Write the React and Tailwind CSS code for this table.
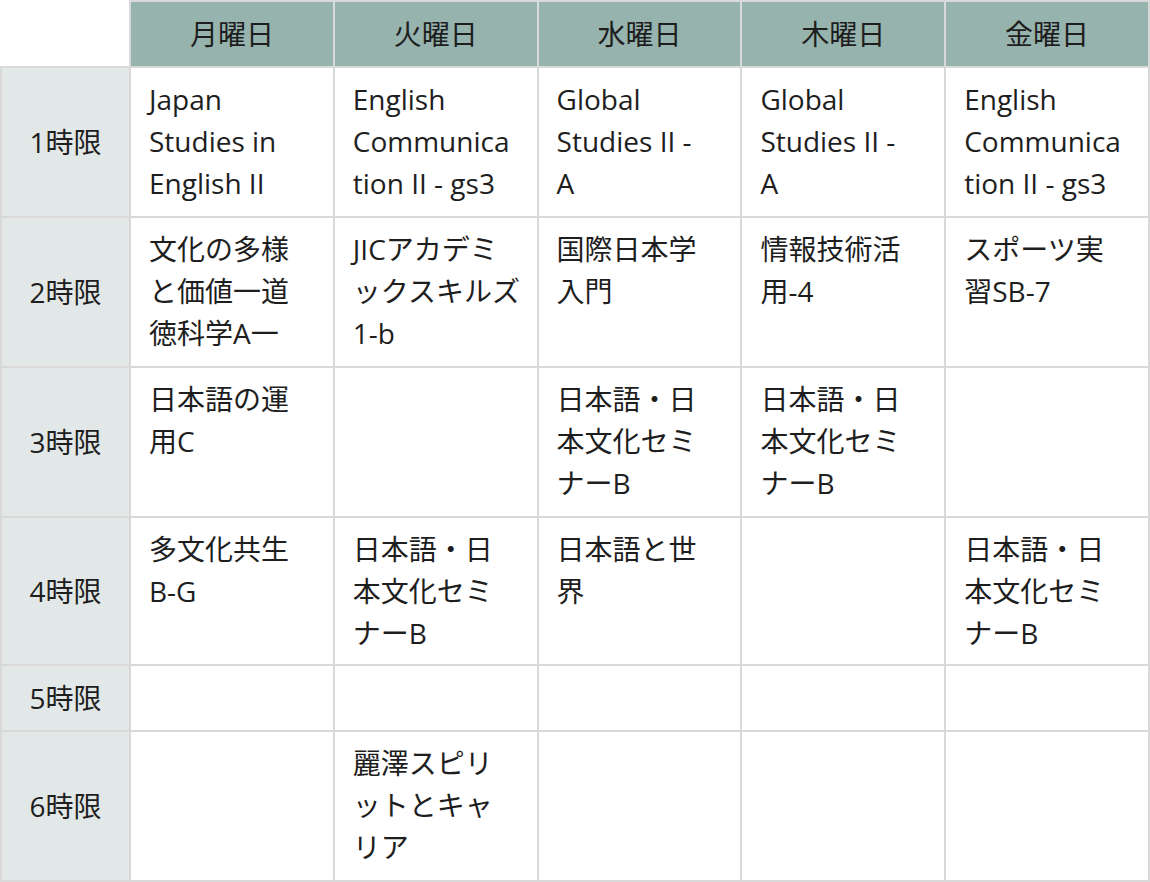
import React from "react";

const days = ["月曜日", "火曜日", "水曜日", "木曜日", "金曜日"];

const rows = [
  {
    label: "1時限",
    h: "h-[150px]",
    cells: [
      ["Japan", "Studies in", "English II"],
      ["English", "Communica", "tion II - gs3"],
      ["Global", "Studies II -", "A"],
      ["Global", "Studies II -", "A"],
      ["English", "Communica", "tion II - gs3"],
    ],
  },
  {
    label: "2時限",
    h: "h-[150px]",
    cells: [
      ["文化の多様", "と価値一道", "徳科学A一"],
      ["JICアカデミ", "ックスキルズ", "1-b"],
      ["国際日本学", "入門"],
      ["情報技術活", "用-4"],
      ["スポーツ実", "習SB-7"],
    ],
  },
  {
    label: "3時限",
    h: "h-[150px]",
    cells: [
      ["日本語の運", "用C"],
      [],
      ["日本語・日", "本文化セミ", "ナーB"],
      ["日本語・日", "本文化セミ", "ナーB"],
      [],
    ],
  },
  {
    label: "4時限",
    h: "h-[148px]",
    cells: [
      ["多文化共生", "B-G"],
      ["日本語・日", "本文化セミ", "ナーB"],
      ["日本語と世", "界"],
      [],
      ["日本語・日", "本文化セミ", "ナーB"],
    ],
  },
  { label: "5時限", h: "h-[66px]", cells: [[], [], [], [], []] },
  {
    label: "6時限",
    h: "h-[150px]",
    cells: [[], ["麗澤スピリ", "ットとキャ", "リア"], [], [], []],
  },
];

export default function App() {
  return (
    <div
      className="w-[1150px] h-[882px] bg-white text-[#1e1e1e]"
      style={{ fontFamily: '"Open Sans", "Noto Sans CJK JP", sans-serif' }}
    >
      <table className="w-[1150px] border-collapse table-fixed text-[28px] leading-[42px]">
        <colgroup>
          <col className="w-[129px]" />
          <col />
          <col />
          <col />
          <col />
          <col />
        </colgroup>
        <thead>
          <tr>
            <th className="p-0 border-0 bg-white"></th>
            {days.map((d) => (
              <th
                key={d}
                className="border-2 border-[#d9d9d9] bg-[#97b3ae] font-normal text-center py-[11px] px-0 h-[64px]"
              >
                {d}
              </th>
            ))}
          </tr>
        </thead>
        <tbody>
          {rows.map((r) => (
            <tr key={r.label}>
              <td
                className={`border-2 border-[#d9d9d9] bg-[#e2e8e7] text-center align-middle px-0 py-0 ${r.h}`}
              >
                {r.label}
              </td>
              {r.cells.map((lines, i) => (
                <td
                  key={i}
                  className="border-2 border-[#d9d9d9] bg-white align-top pl-[18px] pr-[2px] pt-[10px] pb-0"
                >
                  {lines.map((l, j) => (
                    <div key={j} className="whitespace-nowrap">
                      {l}
                    </div>
                  ))}
                </td>
              ))}
            </tr>
          ))}
        </tbody>
      </table>
    </div>
  );
}
